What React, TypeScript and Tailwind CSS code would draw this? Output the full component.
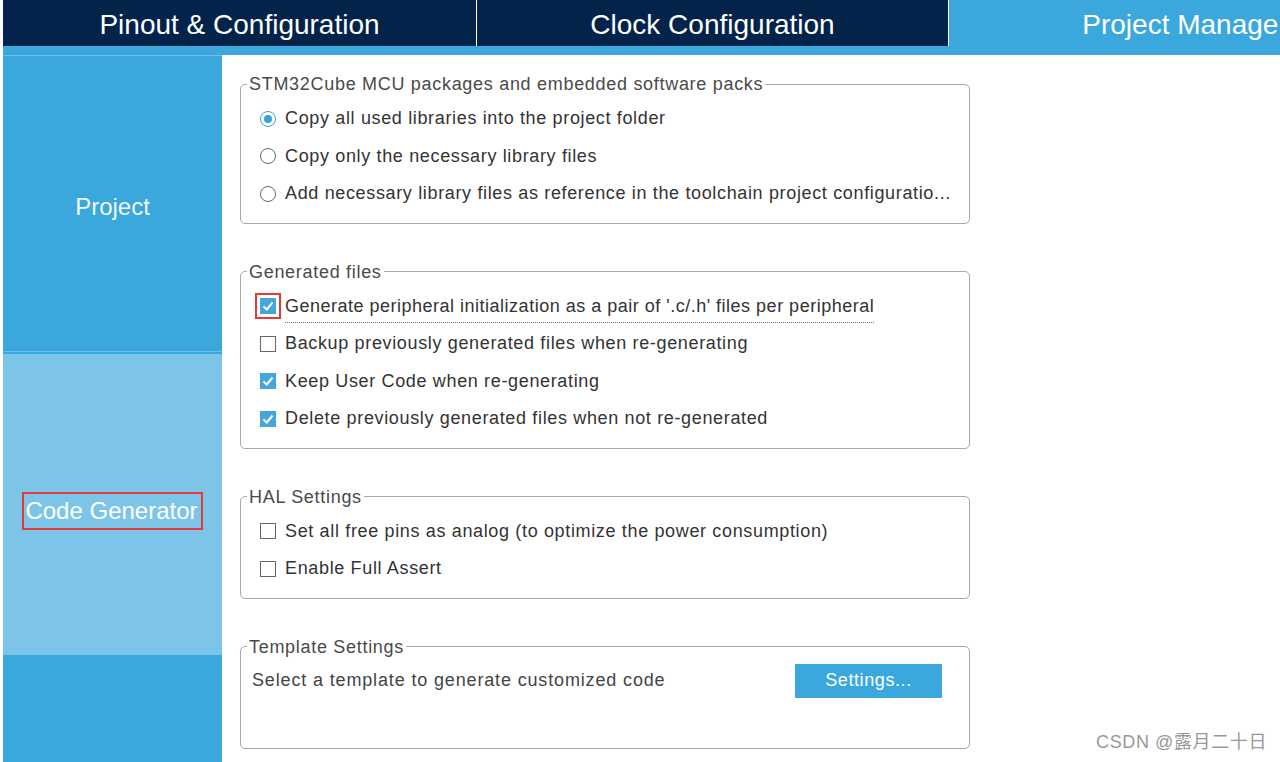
import React from 'react'

const font = { fontFamily: '"Liberation Sans", Arial, "Noto Sans CJK SC", sans-serif' }

function Radio({ on }: { on?: boolean }) {
  return (
    <span className={`w-[16px] h-[16px] rounded-full border flex items-center justify-center bg-white shrink-0 ${on ? 'border-[#3aa0d8]' : 'border-[#666]'}`}>
      {on && <span className="w-[8px] h-[8px] rounded-full bg-[#3aa0d8]" />}
    </span>
  )
}

function Check({ on, marked }: { on?: boolean; marked?: boolean }) {
  return (
    <span
      className={`w-[16px] h-[16px] flex items-center justify-center shrink-0 ${on ? 'bg-[#45a6dc]' : 'bg-white border border-[#666]'} ${marked ? 'outline-2 outline-[#e53935] outline-offset-[3px]' : ''}`}
    >
      {on && (
        <svg width="14" height="14" viewBox="0 0 14 14">
          <polyline points="2.5,7.5 5.8,10.5 11.5,3.5" fill="none" stroke="white" strokeWidth="2" />
        </svg>
      )}
    </span>
  )
}

function Row({ children }: { children: React.ReactNode }) {
  return <div className="h-[37.5px] flex items-center gap-[9px] pl-[19px] text-[18px] tracking-[0.65px] text-[#333]">{children}</div>
}

function Group({ title, children, className = '' }: { title: string; children: React.ReactNode; className?: string }) {
  return (
    <fieldset className={`w-[730px] border border-[#a8a8a8] rounded-[5px] ${className}`}>
      <legend className="ml-[6px] px-[2px] text-[18px] leading-[20px] tracking-[0.7px] text-[#4a4a4a]">{title}</legend>
      {children}
    </fieldset>
  )
}

export default function App() {
  return (
    <div className="relative w-[1280px] h-[762px] overflow-hidden bg-white pl-[3px] flex flex-col" style={font}>
      {/* Top tabs */}
      <div className="flex h-[46px] gap-px bg-white shrink-0">
        <div className="w-[473px] shrink-0 bg-[#03234b] flex items-center justify-center pt-[3px] text-white text-[28px]">Pinout &amp; Configuration</div>
        <div className="w-[471px] shrink-0 bg-[#03234b] flex items-center justify-center pt-[3px] text-white text-[28px]">Clock Configuration</div>
        <div className="w-[472px] shrink-0 bg-[#3aa8dc] flex items-center justify-center pt-[3px] text-white text-[28px]">Project Manager</div>
      </div>
      <div className="h-[9px] bg-[#3aa8dc] shrink-0" />

      <div className="flex flex-1 min-h-0">
        {/* Sidebar */}
        <div className="w-[219px] shrink-0 flex flex-col">
          <div className="h-[296px] border-t border-[#6cc0e8] bg-[#3aa8dc] flex items-center justify-center pt-[6px] text-white/95 text-[24px]">Project</div>
          <div className="h-[3px] border-t border-[#6cc0e8] bg-[#3aa8dc]" />
          <div className="h-[301px] bg-[#7dc5e8] flex items-center justify-center pt-[12px]">
            <span className="text-white text-[24px] leading-[32px] pr-[2px] outline-2 outline-[#e53935] outline-offset-[1px]">Code Generator</span>
          </div>
          <div className="flex-1 bg-[#3aa8dc]" />
        </div>

        {/* Content */}
        <div className="ml-[18px] pt-[19px] flex flex-col">
          <Group title="STM32Cube MCU packages and embedded software packs" className="pb-[10px]">
            <div className="pt-[6px]">
              <Row><Radio on />Copy all used libraries into the project folder</Row>
              <Row><Radio />Copy only the necessary library files</Row>
              <Row><Radio />Add necessary library files as reference in the toolchain project configuratio...</Row>
            </div>
          </Group>

          <Group title="Generated files" className="mt-[38px] pb-[10px]">
            <div className="pt-[6px]">
              <Row>
                <Check on marked />
                <span className="border-b border-dotted border-[#777] pb-[2px] mt-[3px] tracking-[0.5px]">Generate peripheral initialization as a pair of '.c/.h' files per peripheral</span>
              </Row>
              <Row><Check />Backup previously generated files when re-generating</Row>
              <Row><Check on />Keep User Code when re-generating</Row>
              <Row><Check on />Delete previously generated files when not re-generated</Row>
            </div>
          </Group>

          <Group title="HAL Settings" className="mt-[38px] pb-[10px]">
            <div className="pt-[6px]">
              <Row><Check />Set all free pins as analog (to optimize the power consumption)</Row>
              <Row><Check />Enable Full Assert</Row>
            </div>
          </Group>

          <Group title="Template Settings" className="mt-[38px] pb-[48px]">
            <div className="pt-[5px] h-[43px] flex items-center pl-[11px] pr-[27px]">
              <span className="text-[18px] tracking-[0.85px] text-[#444]">Select a template to generate customized code</span>
              <button className="ml-auto w-[147px] h-[34px] bg-[#3aa8dc] text-white text-[18px] tracking-[0.6px]">Settings...</button>
            </div>
          </Group>
        </div>
      </div>

      <div className="absolute right-[13px] bottom-[6px] text-[18px] tracking-[0.6px] text-[#999]">CSDN @露月二十日</div>
    </div>
  )
}
